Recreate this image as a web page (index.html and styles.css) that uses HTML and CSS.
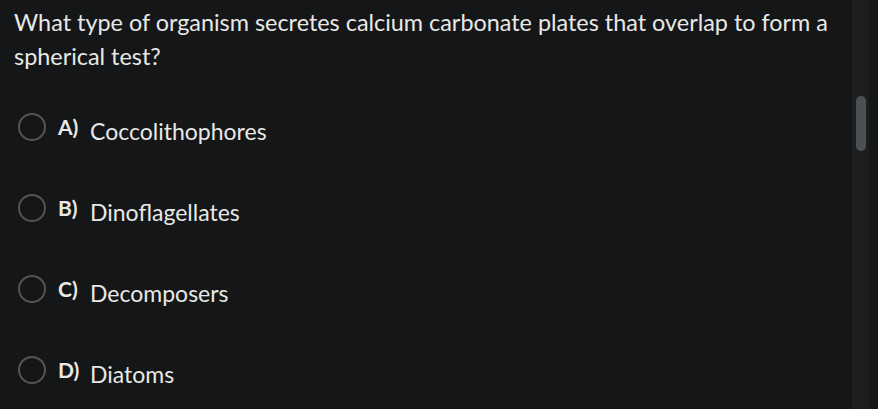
FILE: index.html
```html
<!DOCTYPE html>
<html lang="en">
<head>
  <meta charset="UTF-8">
  <title>Question</title>
  <link rel="stylesheet" href="styles.css">
</head>
<body>
  <div class="page">
    <div class="content">
      <p class="question">What type of organism secretes calcium carbonate plates that overlap to form a spherical test?</p>
      <ul class="options">
        <li class="option"><span class="radio"></span><span class="letter">A)</span><span class="answer">Coccolithophores</span></li>
        <li class="option"><span class="radio"></span><span class="letter">B)</span><span class="answer">Dinoflagellates</span></li>
        <li class="option"><span class="radio"></span><span class="letter">C)</span><span class="answer">Decomposers</span></li>
        <li class="option"><span class="radio"></span><span class="letter">D)</span><span class="answer">Diatoms</span></li>
      </ul>
    </div>
    <div class="scrollbar"><div class="thumb"></div></div>
  </div>
</body>
</html>
```

FILE: styles.css
```css
body {
  margin: 0;
  background-color: #141618;
  color: #e8e8e6;
  font-family: Lato, "Noto Sans", sans-serif;
}

.page {
  display: flex;
  height: 409px;
  overflow: hidden;
}

.content {
  flex: 1;
  padding: 5px 0 0 14px;
}

.question {
  margin: 0;
  font-size: 23.4px;
  line-height: 34px;
  max-width: 830px;
}

.options {
  list-style: none;
  margin: 23px 0 0 0;
  padding: 0 0 0 4px;
}

.option {
  display: flex;
  align-items: center;
  height: 81px;
  margin-top: -26px;
  margin-bottom: 26px;
}

.option:first-child {
  margin-top: -6px;
}

.radio {
  width: 24px;
  height: 24px;
  border: 2px solid #55554f;
  border-radius: 50%;
  margin-right: 12px;
  position: relative;
  top: -4px;
}

.letter {
  font-size: 21px;
  font-weight: bold;
  width: 32px;
  position: relative;
  top: -4px;
}

.answer {
  font-size: 23px;
}

.scrollbar {
  width: 17px;
  margin-right: 9px;
  background-color: #1d1e20;
  position: relative;
}

.thumb {
  position: absolute;
  left: 4px;
  top: 96px;
  width: 10px;
  height: 55px;
  border-radius: 5px;
  background-color: #4b5152;
}
```
